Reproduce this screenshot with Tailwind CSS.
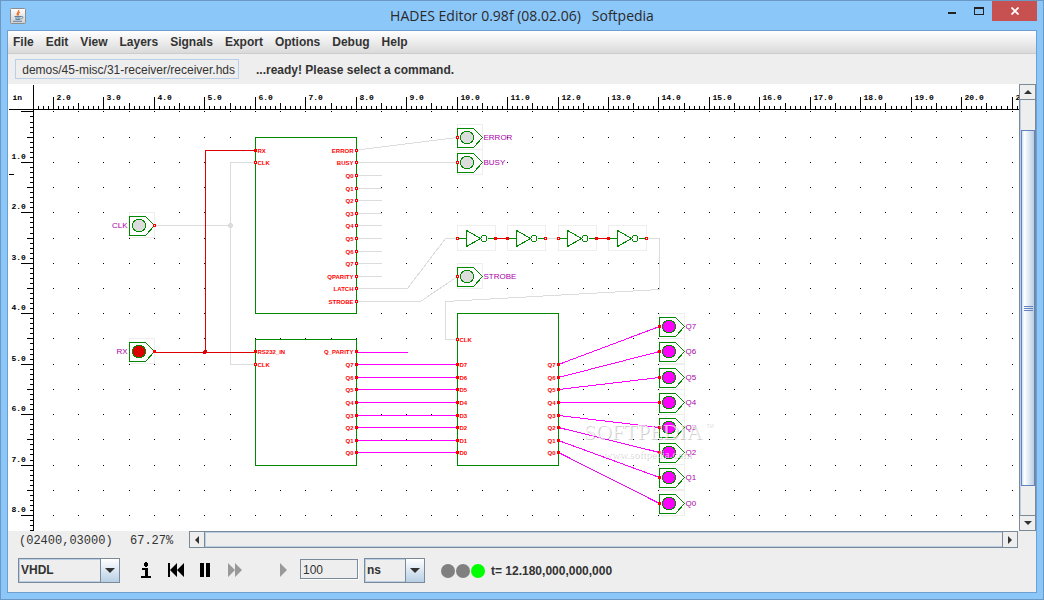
<!DOCTYPE html>
<html lang="en">
<head>
<meta charset="utf-8">
<title>HADES Editor</title>
<script src="https://cdn.jsdelivr.net/npm/@tailwindcss/browser@4"></script>
</head>
<body class="h-screen overflow-hidden font-['Liberation_Sans',sans-serif] text-xs text-[#333]">
<div class="flex h-full flex-col border border-[#6b98c4] bg-[#8cc7fa] px-[6px] pb-[6px]">
  <header class="grid h-[29px] shrink-0 grid-cols-[1fr_auto_1fr]">
    <div class="flex items-center pl-[3px]">
      <svg class="size-4" viewBox="0 0 16 16" aria-hidden="true">
        <defs><linearGradient id="cup" x2="0" y2="1"><stop stop-color="#fff"/><stop offset="1" stop-color="#cfcfcf"/></linearGradient></defs>
        <rect x=".5" y=".5" width="15" height="15" rx="1" fill="url(#cup)" stroke="#8c8c8c"/>
        <path d="M8.5 2C9.500 4 6 4.500 7.500 7.500M10 4C8 5 8 6 8.800 7.500" fill="none" stroke="#e8792b" stroke-width="1.300"/>
        <path d="M4.500 8.500h6.500M5 10h5.500M5.500 11.500h4.500M3 13.300h9" stroke="#5b83a5" fill="none"/>
        <path d="M11 8.500c3-.500 2.500 2-.500 2.500" fill="none" stroke="#5b83a5"/>
      </svg>
    </div>
    <h1 class="whitespace-pre pt-[5px] font-['Open_Sans',sans-serif] text-[14px] leading-5 text-[#2a2a2a]">HADES Editor 0.98f (08.02.06)   Softpedia</h1>
    <div class="flex items-start justify-end">
      <button aria-label="Minimize" class="flex h-5 w-[27px] items-center justify-center"><span class="mt-[4px] h-[2px] w-2 bg-[#222]"></span></button>
      <button aria-label="Maximize" class="flex h-5 w-[27px] items-center justify-center"><span class="h-2 w-[10px] border border-t-2 border-[#222]"></span></button>
      <button aria-label="Close" class="flex h-5 w-[45px] items-center justify-center bg-[#c75050]">
        <svg class="size-2" viewBox="0 0 8 8"><path d="M.5.5l7 7M7.500.5l-7 7" stroke="#fff" stroke-width="1.800"/></svg>
      </button>
    </div>
  </header>

  <main class="flex min-h-0 flex-1 flex-col border border-[#6f9fce] bg-[#eee]">
    <nav class="flex h-[23px] shrink-0 items-center gap-[12px] border-b border-[#ccc] bg-linear-to-b from-white to-[#dadada] pl-[5px] font-bold">
      <button>File</button><button>Edit</button><button>View</button><button>Layers</button><button>Signals</button><button>Export</button><button>Options</button><button>Debug</button><button>Help</button>
    </nav>
    <div class="flex h-[30px] shrink-0 items-center gap-[17px] pl-[7px]">
      <input aria-label="Design file" class="h-5 w-56 border border-[#b8cfe5] px-[3px] pt-px text-right text-xs outline-none" value="demos/45-misc/31-receiver/receiver.hds">
      <p class="pt-px font-bold">...ready! Please select a command.</p>
    </div>

    <div class="flex min-h-0 flex-1">
      <svg id="sheet" class="h-full min-w-0 flex-1 bg-white" shape-rendering="crispEdges" role="img" aria-label="Schematic"></svg>
      <div class="flex w-[17px] shrink-0 flex-col border-t border-l border-[#7a8a99]">
        <button aria-label="Scroll up" class="flex h-[15px] items-center justify-center border-r border-b border-[#7a8a99] bg-[#eee]">
          <svg class="h-1 w-2" viewBox="0 0 8 4"><path d="M4 0l4 4H0z" fill="#333"/></svg></button>
        <div class="flex min-h-0 flex-1 flex-col border-r border-l border-r-[#7a8a99] border-l-[#b8cfe5] pt-[30px] pb-[29px]">
          <div class="flex flex-1 flex-col items-center justify-center gap-px border border-[#6382bf] bg-linear-to-r from-[#c8ddf2] via-white via-20% to-[#b8cfe5]">
            <i class="h-px w-[9px] bg-[#6382bf]"></i><i class="h-px w-[9px] bg-[#6382bf]"></i><i class="h-px w-[9px] bg-[#6382bf]"></i>
          </div>
        </div>
        <button aria-label="Scroll down" class="flex h-4 items-center justify-center border-t border-r border-b border-[#7a8a99] bg-[#eee]">
          <svg class="h-1 w-2" viewBox="0 0 8 4"><path d="M0 0h8L4 4z" fill="#333"/></svg></button>
      </div>
    </div>

    <div class="flex h-[17px] shrink-0 pr-[18px] font-['Liberation_Mono',monospace] leading-5">
      <span class="w-[111px] pl-[11px]">(02400,03000)</span><span class="w-[70px] pl-[11px]">67.27%</span>
      <div class="flex flex-1 border border-[#7a8a99]">
        <button aria-label="Scroll left" class="flex w-[15px] items-center justify-center border-r border-[#7a8a99]"><svg class="h-2 w-1" viewBox="0 0 4 8"><path d="M4 0v8L0 4z" fill="#333"/></svg></button>
        <div class="flex-1 border-y border-l border-[#b8cfe5]"></div>
        <button aria-label="Scroll right" class="flex w-[15px] items-center justify-center border-l border-[#7a8a99]"><svg class="h-2 w-1" viewBox="0 0 4 8"><path d="M0 0l4 4-4 4z" fill="#333"/></svg></button>
      </div>
    </div>

    <div class="flex h-[44px] shrink-0 items-center pl-[10px]">
      <div class="grid h-[25px] w-[102px] border border-[#7a8a99]">
        <select aria-label="Language" class="col-start-1 row-start-1 appearance-none border border-[#b8cfe5] px-px font-bold outline-none"><option>VHDL</option></select>
        <span class="pointer-events-none col-start-1 row-start-1 flex w-[19px] items-center justify-center justify-self-end border-l border-[#7a8a99] bg-linear-to-b from-white to-[#b8cfe5]"><svg class="h-[5px] w-[10px]" viewBox="0 0 10 5"><path d="M0 0h10L5 5z" fill="#333"/></svg></span>
      </div>
      <button aria-label="Info" class="ml-[21px]"><svg class="h-4 w-[10px]" viewBox="0 0 10 16"><path d="M3 1h4v3H3zM4 0h2v5H4zM1 6h6v8h3v2H0v-2h4V8H1z"/></svg></button>
      <button aria-label="Rewind" class="ml-[17px]"><svg class="h-[14px] w-4" viewBox="0 0 16 14"><path d="M0 0h2v14H0zM9 0v14L2 7zM16 0v14L9 7z"/></svg></button>
      <button aria-label="Pause" class="ml-4"><svg class="h-[14px] w-[10px]" viewBox="0 0 10 14"><path d="M0 0h4v14H0zM6 0h4v14H6z"/></svg></button>
      <button aria-label="Fast forward" class="ml-[18px]"><svg class="h-[14px] w-[14px]" viewBox="0 0 14 14"><path d="M0 0l7 7-7 7zM7 0l7 7-7 7z" fill="#999"/></svg></button>
      <button aria-label="Step" class="ml-[38px]"><svg class="h-[14px] w-[7px]" viewBox="0 0 7 14"><path d="M0 0l7 7-7 7z" fill="#999"/></svg></button>
      <input aria-label="Step size" value="100" class="-mt-[2px] ml-[13px] h-5 w-[58px] border border-[#7a8a99] pt-px pl-[2px] text-xs shadow-[1px_1px_0_#fff] outline-none">
      <div class="ml-[6px] grid h-[25px] w-[61px] border border-[#7a8a99]">
        <select aria-label="Time unit" class="col-start-1 row-start-1 appearance-none border border-[#b8cfe5] px-px font-bold outline-none"><option>ns</option></select>
        <span class="pointer-events-none col-start-1 row-start-1 flex w-[19px] items-center justify-center justify-self-end border-l border-[#7a8a99] bg-linear-to-b from-white to-[#b8cfe5]"><svg class="h-[5px] w-[10px]" viewBox="0 0 10 5"><path d="M0 0h10L5 5z" fill="#333"/></svg></span>
      </div>
      <div class="ml-4 flex gap-px pt-px"><i class="size-[14px] rounded-full bg-[#808080]"></i><i class="size-[14px] rounded-full bg-[#808080]"></i><i class="size-[14px] rounded-full bg-[#0f0]"></i></div>
      <p class="ml-[6px] pt-px font-bold">t= 12.180,000,000,000</p>
    </div>
  </main>
</div>

<script>
const GREEN = '#008800', GRAY = '#dcdcdc', RED = '#dd0000', PINK = '#ff00ff', out = [];
const line = (pts, c) => out.push(`<polyline points="${pts}" fill="none" stroke="${c}"/>`);
const box = (x, y, w, h, c, f = 'none') => out.push(`<rect x="${x}" y="${y}" width="${w}" height="${h}" fill="${f}" stroke="${c}"/>`);
const label = (x, y, s, cls, anchor = 'start') => out.push(`<text x="${x}" y="${y}" class="${cls}" text-anchor="${anchor}">${s}</text>`);
const RULE = "font-['Liberation_Mono',monospace] text-[8px] fill-black font-bold";
const PIN = "font-['Liberation_Sans',sans-serif] text-[6px] fill-[#f00] font-bold";
const NAME = "font-['Liberation_Sans',sans-serif] text-[8px] fill-[#aa00aa]";
const port = (x, y, c) => box(x - 1, y - 1, 2, 2, '#f00', c === GRAY ? '#fff' : '#f00');

// Rulers and grid
const gx = n => Math.round(53.03 + n * 25.225), gy = n => Math.round(111.45 + n * 25.222);
for (let j = 0; j <= 16; j++) for (let i = 0; i <= 38; i++) out.push(`<rect x="${gx(i) - .5}" y="${gy(j) - .5}" width="1" height="1" fill="#000"/>`);
line('8,109 1018,109', '#000'); line('33,84 33,530', '#000'); line('8,174 13,174', '#000');
label(12, 99, 'in', RULE);
for (let k = -3; k <= 191; k++) {
  const x = Math.round(53.03 + k * 5.045), top = k % 10 === 0 ? 96 : k % 5 === 0 ? 102 : 105;
  line(`${x},${top} ${x},109`, '#000');
  if (k % 10 === 0) label(x + 3, 99, (2 + k / 10) + '.0', RULE);
}
for (let k = 0; k <= 83; k++) {
  const y = Math.round(111.45 + k * 5.0444), left = k % 10 === 0 ? 20 : k % 5 === 0 ? 26 : 29;
  line(`${left},${y} 33,${y}`, '#000');
  if (k && k % 10 === 0) label(11, y - 4, (k / 10) + '.0', RULE);
}

// Switches and lamps
function io(x, y, fill, name, input) {
  box(x, y - 13, 25, 25, '#eee', '#fff');
  out.push(`<path d="M${x} ${y - 9}h16l9 9l-9 10h-16z" fill="none" stroke="${GREEN}"/><circle cx="${x + 9.5}" cy="${y}" r="6.5" fill="${fill}" stroke="${GREEN}"/>`);
  if (input) label(x - 2, y + 2, name, NAME, 'end'); else label(x + 26, y + 2, name, NAME);
}
const qy = [326, 351, 377, 402, 427, 452, 477, 503], by = [364, 377, 389, 402, 415, 427, 440, 452];
io(129, 225, GRAY, 'CLK', true); io(129, 351, RED, 'RX', true);
io(457, 137, GRAY, 'ERROR'); io(457, 162, GRAY, 'BUSY'); io(457, 276, GRAY, 'STROBE');
qy.forEach((y, i) => io(659, y, PINK, 'Q' + (7 - i)));

// Inverters
const inv = [457, 507, 558, 608];
inv.forEach(x => {
  box(x, 225, 38, 25, '#eee', '#fff');
  out.push(`<path d="M${x} 238h9M${x + 9} 230v16l14 -8zM${x + 30} 238h8" fill="none" stroke="${GREEN}"/><circle cx="${x + 26.5}" cy="238" r="3" fill="#fff" stroke="${GREEN}"/>`);
});

// Blocks
box(255, 137, 101, 176, GREEN, '#fff'); box(255, 339, 101, 126, GREEN, '#fff'); box(457, 313, 101, 152, GREEN, '#fff');

// Wires
const ry = [150, 162, 175, 188, 200, 213, 225, 238, 251, 263, 276, 288, 301];
ry.slice(2, 11).forEach(y => line(`356,${y} 381,${y}`, GRAY));
line('356,150 361,149 457,137', GRAY); line('356,162 457,162', GRAY);
line('356,288 407,288 445,238 457,238', GRAY); line('356,301 420,301 457,276', GRAY);
line('646,238 659,238 659,289 445,301 445,339 457,339', GRAY); line('545,238 558,238', GRAY);
line('154,225 230,225', GRAY); line('255,162 230,162 230,364 255,364', GRAY);
line('154,352 255,352', RED); line('205,352 205,150 255,150', RED);
line('495,238 507,238', RED); line('596,238 608,238', RED);
out.push(`<circle cx="230" cy="225" r="2" fill="${GRAY}" stroke="${GRAY}"/><circle cx="204.5" cy="351.5" r="2" fill="${RED}"/>`);
line('356,352 407,352', PINK);
by.forEach((y, i) => { line(`356,${y} 457,${y}`, PINK); line(`558,${y} 659,${qy[i]}`, PINK); });

// Pins
const pin = (x, y, s, right, c) => { port(x, y, c); label(right ? x - 3 : x + 2, y + 2, s, PIN, right ? 'end' : 'start'); };
pin(255, 150, 'RX', false, RED); pin(255, 162, 'CLK', false, GRAY);
['ERROR', 'BUSY', 'Q0', 'Q1', 'Q2', 'Q3', 'Q4', 'Q5', 'Q6', 'Q7', 'QPARITY', 'LATCH', 'STROBE'].forEach((s, i) => pin(356, ry[i], s, true, GRAY));
pin(255, 351, 'RS232_IN', false, RED); pin(255, 364, 'CLK', false, GRAY); pin(356, 351, 'Q_PARITY', true, PINK);
pin(457, 339, 'CLK', false, GRAY);
by.forEach((y, i) => { pin(356, y, 'Q' + (7 - i), true, PINK); pin(457, y, 'D' + (7 - i), false, PINK); pin(558, y, 'Q' + (7 - i), true, PINK); port(659, qy[i], PINK); });
port(154, 225, GRAY); port(154, 351, RED); [137, 162, 276].forEach(y => port(457, y, GRAY));
inv.forEach((x, i) => { port(x, 238, i % 2 ? RED : GRAY); port(x + 38, 238, i % 2 ? GRAY : RED); });

// Watermark
const mark = (x, y, s, cls) => { label(x + 1, y + 1, s, cls + ' fill-black/20'); label(x, y, s, cls + ' fill-white/70'); };
mark(583, 438, 'SOFTPEDIA', "font-['Liberation_Serif',serif] text-[22px]");
mark(603, 457, 'www.softpedia.com', "font-['Liberation_Serif',serif] text-[11px]");
mark(705, 426, 'TM', "font-['Liberation_Sans',sans-serif] text-[5px]");

document.getElementById('sheet').innerHTML = `<g transform="translate(-7.5 -83.5)">${out.join('')}</g>`;
</script>
</body>
</html>
